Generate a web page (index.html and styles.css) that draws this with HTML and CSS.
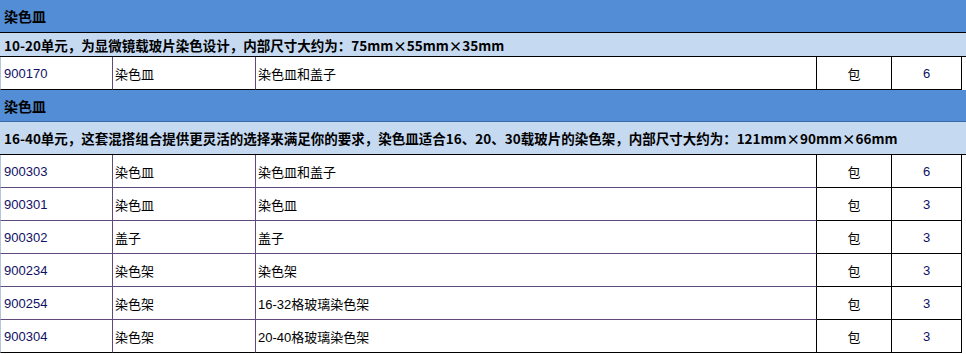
FILE: index.html
```html
<!DOCTYPE html>
<html lang="zh">
<head>
<meta charset="utf-8">
<title>染色皿</title>
<link rel="stylesheet" href="styles.css">
</head>
<body>
<div class="sheet">
  <div class="head head-a">染色皿</div>
  <div class="desc desc-a">10-20单元，为显微镜载玻片染色设计，内部尺寸大约为：75mm×55mm×35mm</div>
  <div class="row row-black">
    <div class="c code">900170</div><div class="c name">染色皿</div><div class="c spec">染色皿和盖子</div><div class="c unit">包</div><div class="c qty">6</div><div class="c tail"></div>
  </div>
  <div class="head head-b">染色皿</div>
  <div class="desc desc-b">16-40单元，这套混搭组合提供更灵活的选择来满足你的要求，染色皿适合16、20、30载玻片的染色架，内部尺寸大约为：121mm×90mm×66mm</div>
  <div class="row">
    <div class="c code">900303</div><div class="c name">染色皿</div><div class="c spec">染色皿和盖子</div><div class="c unit">包</div><div class="c qty">6</div><div class="c tail"></div>
  </div>
  <div class="row">
    <div class="c code">900301</div><div class="c name">染色皿</div><div class="c spec">染色皿</div><div class="c unit">包</div><div class="c qty">3</div><div class="c tail"></div>
  </div>
  <div class="row">
    <div class="c code">900302</div><div class="c name">盖子</div><div class="c spec">盖子</div><div class="c unit">包</div><div class="c qty">3</div><div class="c tail"></div>
  </div>
  <div class="row">
    <div class="c code">900234</div><div class="c name">染色架</div><div class="c spec">染色架</div><div class="c unit">包</div><div class="c qty">3</div><div class="c tail"></div>
  </div>
  <div class="row">
    <div class="c code">900254</div><div class="c name">染色架</div><div class="c spec">16-32格玻璃染色架</div><div class="c unit">包</div><div class="c qty">3</div><div class="c tail"></div>
  </div>
  <div class="row row-last">
    <div class="c code">900304</div><div class="c name">染色架</div><div class="c spec">20-40格玻璃染色架</div><div class="c unit">包</div><div class="c qty">3</div><div class="c tail"></div>
  </div>
</div>
</body>
</html>
```
FILE: styles.css
```css
* { box-sizing: border-box; }
html, body { margin: 0; padding: 0; background: #ffffff; }
body {
  font-family: "Liberation Sans", "Noto Sans CJK SC", sans-serif;
  font-size: 13px;
  color: #000;
}
.sheet { width: 966px; }

.head {
  background: #538dd5;
  font-family: "Noto Sans CJK SC", sans-serif;
  font-weight: bold;
  font-size: 14px;
  color: #000;
  padding-left: 4px;
  display: flex;
  align-items: center;
}
.head-a { height: 33px; border-bottom: 1px solid #000; }
.head-b { height: 32px; border-bottom: 1px solid #3b6aa8; }

.desc {
  background: #c5d9f1;
  font-family: "Noto Sans CJK SC", sans-serif;
  font-weight: bold;
  font-size: 13.5px;
  color: #000;
  padding-left: 4px;
  display: flex;
  align-items: center;
  border-bottom: 1px solid #000;
  white-space: nowrap;
}
.desc-a { height: 24px; }
.desc-b { height: 33px; }

.row {
  display: grid;
  grid-template-columns: 113px 143px 561px 75px 70px 1fr;
  height: 33px;
}
.c {
  display: flex;
  align-items: center;
  border-bottom: 1px solid #604a7b;
  white-space: nowrap;
}
.code {
  border-left: 1px solid #b4c6de;
  border-right: 1px solid #604a7b;
  padding-left: 3px;
  color: #101066;
}
.name {
  border-right: 1px solid #604a7b;
  padding-left: 2px;
  font-family: "Noto Sans CJK SC", sans-serif;
}
.spec {
  border-right: 1px solid #000;
  padding-left: 2px;
}
.unit {
  border-right: 1px solid #000;
  border-bottom-color: #000;
  justify-content: center;
  font-family: "Noto Sans CJK SC", sans-serif;
}
.qty {
  border-right: 1px solid #000;
  border-bottom-color: #000;
  justify-content: center;
  color: #101066;
}
.tail { border-bottom: none; }

.row-black .c { border-bottom-color: #000; }
.row-black .tail { border-bottom: none; }
.row-last .c { border-bottom-color: #000; }
.row-last .tail { border-bottom: none; }
```
